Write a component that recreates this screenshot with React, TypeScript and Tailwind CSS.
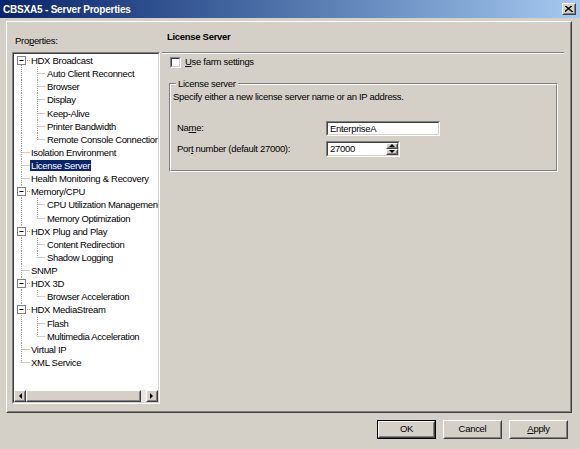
import React from "react";

type Node = { label: string; children?: string[]; selected?: boolean };

const tree: Node[] = [
  { label: "HDX Broadcast", children: ["Auto Client Reconnect", "Browser", "Display", "Keep-Alive", "Printer Bandwidth", "Remote Console Connection"] },
  { label: "Isolation Environment" },
  { label: "License Server", selected: true },
  { label: "Health Monitoring & Recovery" },
  { label: "Memory/CPU", children: ["CPU Utilization Management", "Memory Optimization"] },
  { label: "HDX Plug and Play", children: ["Content Redirection", "Shadow Logging"] },
  { label: "SNMP" },
  { label: "HDX 3D", children: ["Browser Acceleration"] },
  { label: "HDX MediaStream", children: ["Flash", "Multimedia Acceleration"] },
  { label: "Virtual IP" },
  { label: "XML Service" },
];

const LINE = "#9a9a9a";

function RootRow({ node, first, last }: { node: Node; first: boolean; last: boolean }) {
  const hasKids = !!node.children;
  return (
    <div className="flex h-[13.13px] items-center">
      <svg width="16" height="13" className="shrink-0">
        <line x1="7.5" y1={first ? (hasKids ? 11 : 6.5) : 0} x2="7.5" y2={last ? 6.5 : 13} stroke={LINE} strokeDasharray="1 1" />
        <line x1={hasKids ? 11 : 7.5} y1="6.5" x2="16" y2="6.5" stroke={LINE} strokeDasharray="1 1" />
        {hasKids && (
          <g>
            <rect x="3.5" y="2.5" width="8" height="8" fill="#fff" stroke="#808080" />
            <line x1="5.5" y1="6.5" x2="9.5" y2="6.5" stroke="#000" />
          </g>
        )}
      </svg>
      <span
        className={`px-[1px] leading-[11px] whitespace-nowrap ${node.selected ? "bg-[#0a246a] text-white" : "text-black"}`}
      >
        {node.label}
      </span>
    </div>
  );
}

function ChildRow({ label, last }: { label: string; last: boolean }) {
  return (
    <div className="flex h-[13.13px] items-center">
      <svg width="32" height="13" className="shrink-0">
        <line x1="7.5" y1="0" x2="7.5" y2="13" stroke={LINE} strokeDasharray="1 1" />
        <line x1="23.5" y1="0" x2="23.5" y2={last ? 6.5 : 13} stroke={LINE} strokeDasharray="1 1" />
        <line x1="23.5" y1="6.5" x2="31" y2="6.5" stroke={LINE} strokeDasharray="1 1" />
      </svg>
      <span className="px-[1px] leading-[11px] whitespace-nowrap text-black tracking-[-0.35px]">{label}</span>
    </div>
  );
}

function Raised({ className = "", children }: { className?: string; children?: React.ReactNode }) {
  return (
    <div className={`border border-t-white border-l-white border-r-[#404040] border-b-[#404040] bg-[#d4d0c8] ${className}`}>
      <div className="h-full w-full border border-t-[#d4d0c8] border-l-[#d4d0c8] border-r-[#808080] border-b-[#808080] flex items-center justify-center">
        {children}
      </div>
    </div>
  );
}

function Arrow({ dir }: { dir: "left" | "right" | "up" | "down" }) {
  const pts: Record<string, string> = {
    left: "4,0 4,6 1,3",
    right: "0,0 0,6 3,3",
    up: "0,3 6,3 3,0",
    down: "0,0 6,0 3,3",
  };
  const w = dir === "left" || dir === "right" ? 5 : 7;
  const h = dir === "left" || dir === "right" ? 7 : 4;
  return (
    <svg width={w} height={h}>
      <polygon points={pts[dir]} fill="#000" />
    </svg>
  );
}

function Button({ children, isDefault }: { children: React.ReactNode; isDefault?: boolean }) {
  const btn = (
    <Raised className="h-full w-full">
      <span className="text-black">{children}</span>
    </Raised>
  );
  return isDefault ? (
    <div className="h-[19px] w-[59px] border border-black">{btn}</div>
  ) : (
    <div className="h-[19px] w-[59px]">{btn}</div>
  );
}

function Sunken({ className = "", children }: { className?: string; children?: React.ReactNode }) {
  return (
    <div className={`border border-t-[#808080] border-l-[#808080] border-r-white border-b-white ${className}`}>
      <div className="h-full w-full border border-t-[#404040] border-l-[#404040] border-r-[#d4d0c8] border-b-[#d4d0c8] bg-white">
        {children}
      </div>
    </div>
  );
}

export default function App() {
  return (
    <div
      className="w-[580px] h-[449px] bg-[#d4d0c8] flex flex-col text-[9.5px] tracking-[-0.3px] overflow-hidden"
      style={{ fontFamily: '"Liberation Sans", Arial, sans-serif' }}
    >
      {/* Title bar */}
      <div className="h-[18px] shrink-0 flex items-center justify-between pl-[3px] pr-[4px] bg-gradient-to-r from-[#0a246a] to-[#a6caf0]">
        <span className="text-white font-bold text-[10px] tracking-[-0.2px]">CBSXA5 - Server Properties</span>
        <Raised className="w-[14px] h-[12px]">
          <svg width="8" height="7">
            <path d="M0 0 L7 6 M7 0 L0 6 M1 0 L8 6 M6 0 L-1 6" stroke="#000" strokeWidth="1" />
          </svg>
        </Raised>
      </div>

      {/* Page panel */}
      <div className="mt-[3px] ml-[6px] w-[566px] h-[392px] shrink-0 border border-t-white border-l-white border-r-[#404040] border-b-[#404040]">
        <div className="h-full w-full border border-t-[#d4d0c8] border-l-[#d4d0c8] border-r-[#808080] border-b-[#808080] flex">
          {/* Left column */}
          <div className="w-[150px] shrink-0 pl-[4px] pt-[11px] flex flex-col">
            <div className="pl-[3px] h-[14px] flex items-center text-black">
              Pro<span className="underline">p</span>erties:
            </div>
            <Sunken className="mt-[4px] w-[148px] h-[352px]">
              <div className="h-full flex flex-col">
                <div className="flex-1 overflow-hidden">
                  {tree.map((n, i) => (
                    <React.Fragment key={n.label}>
                      <RootRow node={n} first={i === 0} last={i === tree.length - 1} />
                      {n.children?.map((c, j) => (
                        <ChildRow key={c} label={c} last={j === n.children!.length - 1} />
                      ))}
                    </React.Fragment>
                  ))}
                </div>
                {/* Horizontal scrollbar */}
                <div className="h-[12px] flex bg-[#e8e6e1]">
                  <Raised className="w-[12px] h-[12px]">
                    <Arrow dir="left" />
                  </Raised>
                  <Raised className="w-[115px] h-[12px]" />
                  <div className="flex-1" />
                  <Raised className="w-[12px] h-[12px]">
                    <Arrow dir="right" />
                  </Raised>
                </div>
              </div>
            </Sunken>
          </div>

          {/* Right column */}
          <div className="flex-1 pl-[4px] pr-[6px] pt-[6px] flex flex-col">
            <div className="font-bold text-black pl-[5px] h-[16px] flex items-center">License Server</div>
            <div className="mt-[7px] h-[2px] border-t border-t-[#808080] border-b border-b-white" />
            <div className="mt-[2px] pl-[8px] flex items-center h-[12px]">
              <div className="w-[11px] h-[11px] border border-t-[#808080] border-l-[#808080] border-r-white border-b-white">
                <div className="w-full h-full border border-t-[#404040] border-l-[#404040] border-r-[#d4d0c8] border-b-[#d4d0c8] bg-white" />
              </div>
              <span className="ml-[4px] text-black">
                <span className="underline">U</span>se farm settings
              </span>
            </div>

            {/* Group box */}
            <div className="relative mt-[15px] ml-[7px] w-[389px] h-[89px] border border-t-[#808080] border-l-[#808080] border-r-white border-b-white">
              <div className="h-full w-full border border-t-white border-l-white border-r-[#808080] border-b-[#808080] pt-[6px] pl-[2px]">
                <span className="absolute -top-[6px] left-[6px] bg-[#d4d0c8] px-[2px] leading-[11px] text-black">License server</span>
                <div className="text-black leading-[12px]">Specify either a new license server name or an IP address.</div>
                <div className="mt-[18px] flex items-center h-[15px]">
                  <span className="w-[153px] pl-[4px] text-black">
                    Na<span className="underline">m</span>e:
                  </span>
                  <Sunken className="w-[114px] h-[15px]">
                    <div className="pl-[2px] leading-[11px] text-black">EnterpriseA</div>
                  </Sunken>
                </div>
                <div className="mt-[5px] flex items-center h-[16px]">
                  <span className="w-[153px] pl-[4px] text-black">
                    Por<span className="underline">t</span> number (default 27000):
                  </span>
                  <Sunken className="w-[74px] h-[16px]">
                    <div className="flex h-full items-center">
                      <div className="flex-1 pl-[2px] text-black leading-[12px]">27000</div>
                      <div className="w-[12px] h-full flex flex-col">
                        <Raised className="h-1/2 w-full">
                          <Arrow dir="up" />
                        </Raised>
                        <Raised className="h-1/2 w-full">
                          <Arrow dir="down" />
                        </Raised>
                      </div>
                    </div>
                  </Sunken>
                </div>
              </div>
            </div>
          </div>
        </div>
      </div>

      {/* Buttons */}
      <div className="mt-[7px] flex justify-end gap-[7px] pr-[12px]">
        <Button isDefault>OK</Button>
        <Button>Cancel</Button>
        <Button>
          <span className="underline">A</span>pply
        </Button>
      </div>
    </div>
  );
}
